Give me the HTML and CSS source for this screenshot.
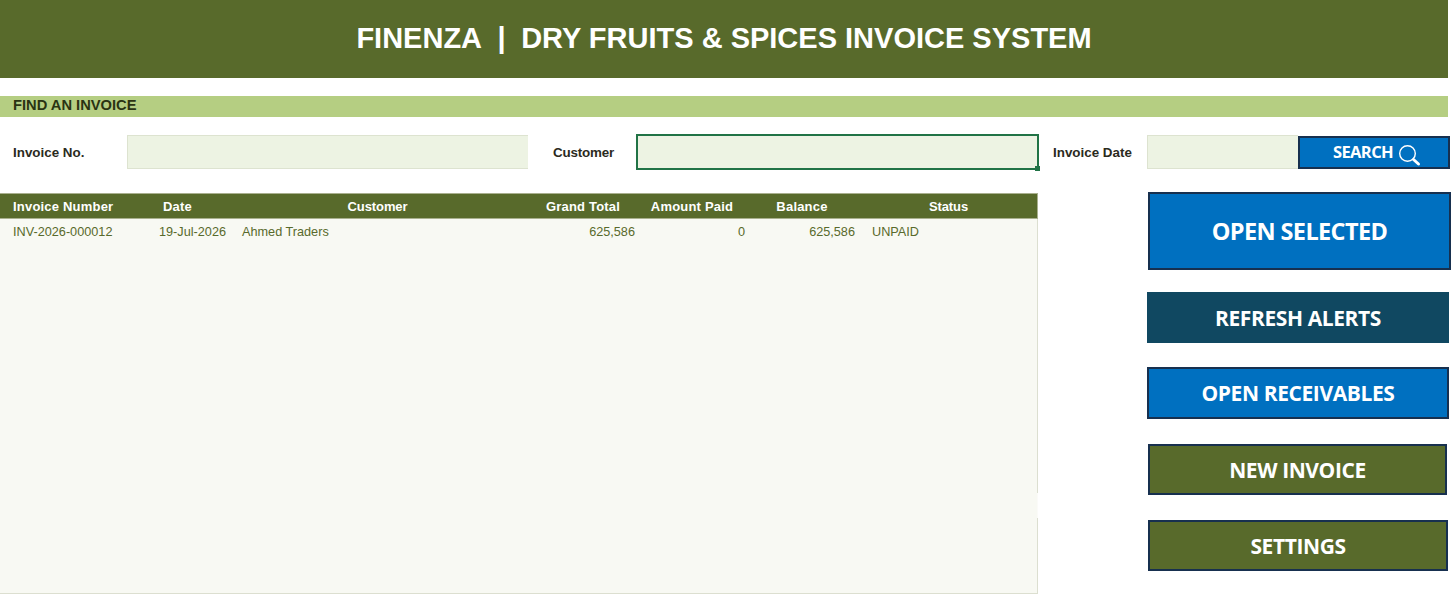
FILE: index.html

```html
<!DOCTYPE html>
<html>
<head>
  <title>Finenza Invoice System</title>
  <link rel="stylesheet" href="styles.css">
</head>
<body>
  <div class="title-bar">
    <span>FINENZA</span>
    <span class="title-sep">|</span>
    <span>DRY FRUITS &amp; SPICES INVOICE SYSTEM</span>
  </div>

  <div class="section-bar">FIND AN INVOICE</div>

  <div class="search-row">
    <div class="field-label label-number">Invoice No.</div>
    <div class="field field-number"></div>
    <div class="field-label label-customer">Customer</div>
    <div class="field field-customer">
      <span class="fill-handle"></span>
    </div>
    <div class="field-label label-date">Invoice Date</div>
    <div class="field field-date"></div>
    <button class="btn btn-blue btn-search">
      SEARCH
      <!-- magnifier -->
      <svg width="24" height="24" viewBox="0 0 24 24" fill="none" stroke="white">
        <circle cx="10.5" cy="10.5" r="7.8" stroke-width="1.4"/>
        <path d="M16.5 16.5l5 4.5" stroke-width="3" stroke-linecap="round"/>
      </svg>
    </button>
  </div>

  <div class="main">
    <div class="invoice-list">
      <div class="list-head">
        <div class="col-number">Invoice Number</div>
        <div class="col-date">Date</div>
        <div class="col-center col-customer">Customer</div>
        <div class="col-center col-total">Grand Total</div>
        <div class="col-center col-paid">Amount Paid</div>
        <div class="col-center col-paid">Balance</div>
        <div class="col-center col-status">Status</div>
      </div>
      <div class="list-row">
        <div class="col-number">INV-2026-000012</div>
        <div class="cell-date">19-Jul-2026</div>
        <div>Ahmed Traders</div>
        <div class="cell-num">625,586</div>
        <div class="cell-num">0</div>
        <div class="cell-num">625,586</div>
        <div class="cell-status">UNPAID</div>
      </div>
      <div class="border-gap"></div>
    </div>

    <div class="actions">
      <button class="btn btn-blue btn-open">OPEN SELECTED</button>
      <button class="btn btn-navy btn-refresh">REFRESH ALERTS</button>
      <button class="btn btn-blue btn-receivables">OPEN RECEIVABLES</button>
      <button class="btn btn-green btn-new">NEW INVOICE</button>
      <button class="btn btn-green btn-settings">SETTINGS</button>
    </div>
  </div>
</body>
</html>
```

FILE: styles.css

```css
* {
  box-sizing: border-box;
}

body {
  margin: 0;
  background: white;
  font-family: "Liberation Sans", Arial, sans-serif;
  overflow: hidden;
}

.title-bar {
  width: 1448px;
  height: 78px;
  padding-bottom: 2px;
  background: #586a2b;
  color: white;
  font-size: 29px;
  font-weight: bold;
  display: flex;
  align-items: center;
  justify-content: center;
}

.title-sep {
  margin: 0 15.5px;
}

.section-bar {
  width: 1448px;
  height: 21px;
  margin-top: 18px;
  padding-left: 13px;
  background: #b5ce82;
  color: #2a3312;
  font-size: 14.7px;
  font-weight: bold;
  line-height: 19px;
}

.search-row {
  display: flex;
  align-items: center;
  height: 34px;
  margin-top: 18px;
}

.search-row > * {
  flex: none;
}

.field-label {
  color: #2b2b1e;
  font-size: 13.4px;
  font-weight: bold;
}

.label-number {
  width: 127px;
  padding-left: 13px;
}

.label-customer {
  width: 108px;
  padding-left: 25px;
  letter-spacing: -0.2px;
}

.label-date {
  width: 108px;
  padding-left: 14px;
}

.field {
  height: 34px;
  background: #edf3e3;
  border: 1px solid #dde3d0;
  border-right: none;
}

.field-number {
  width: 401px;
}

.field-customer {
  position: relative;
  width: 403px;
  height: 36px;
  border: 2px solid #217346;
}

.fill-handle {
  position: absolute;
  right: -3px;
  bottom: -3px;
  width: 5px;
  height: 5px;
  background: #217346;
}

.field-date {
  width: 151px;
}

.btn {
  display: flex;
  align-items: center;
  justify-content: center;
  padding: 0;
  color: white;
  font-family: "Open Sans", sans-serif;
  font-weight: 700;
  border: 2px solid #17304f;
}

.btn-blue {
  background: #0070c0;
}

.btn-navy {
  background: #104861;
  border: none;
}

.btn-green {
  background: #586a2b;
}

.btn-search {
  width: 152px;
  height: 33px;
  padding: 0 0 2px 6px;
  gap: 4px;
  font-size: 16.5px;
  letter-spacing: -0.6px;
}

.btn-search svg {
  margin-top: 7px;
}

.main {
  display: flex;
  margin-top: 24px;
}

.invoice-list {
  position: relative;
  flex: none;
  width: 1038px;
  height: 401px;
  background: #f8f9f3;
  border-right: 1px solid #dcdfd0;
  border-bottom: 1px solid #dcdfd0;
  font-size: 12.7px;
}

.border-gap {
  position: absolute;
  top: 300px;
  right: -1px;
  width: 1px;
  height: 25px;
  background: #fbfbf8;
}

.list-head,
.list-row {
  display: grid;
  grid-template-columns: 150px 92px 283px 115px 110px 110px 177px;
}

.list-head {
  height: 26px;
  margin-right: -1px;
  align-items: center;
  background: #586a2b;
  color: white;
  font-size: 13px;
  font-weight: bold;
  border-top: 1px solid #a9b08e;
  border-right: 1px solid #a9b08e;
  border-bottom: 1px solid #a9b08e;
  letter-spacing: 0.2px;
}

.list-row {
  height: 26px;
  align-items: center;
  color: #586a2b;
}

.col-number {
  padding-left: 13px;
}

.col-date {
  padding-left: 13px;
}

.col-center {
  text-align: center;
}

.col-customer {
  padding-right: 12px;
  letter-spacing: -0.1px;
}

.col-total {
  padding-left: 1px;
}

.col-paid {
  padding-right: 6px;
}

.col-status {
  letter-spacing: -0.1px;
}

.cell-date {
  padding-left: 9px;
}

.cell-num {
  text-align: right;
  padding-right: 5px;
}

.cell-status {
  padding-left: 12px;
}

.actions {
  display: flex;
  flex-direction: column;
  align-items: flex-start;
  margin-left: 109px;
  width: 304px;
}

.actions .btn {
  font-size: 21px;
  letter-spacing: -0.4px;
}

.actions .btn-open {
  width: 303px;
  height: 78px;
  margin-top: -1px;
  margin-left: 1px;
  font-size: 23.5px;
  letter-spacing: -0.6px;
}

.btn-refresh {
  width: 302px;
  height: 51px;
  margin-top: 22px;
}

.btn-receivables {
  width: 302px;
  height: 52px;
  margin-top: 24px;
}

.btn-new {
  width: 299px;
  height: 51px;
  margin-top: 25px;
  margin-left: 1px;
}

.btn-settings {
  width: 300px;
  height: 51px;
  margin-top: 25px;
  margin-left: 1px;
}
```
